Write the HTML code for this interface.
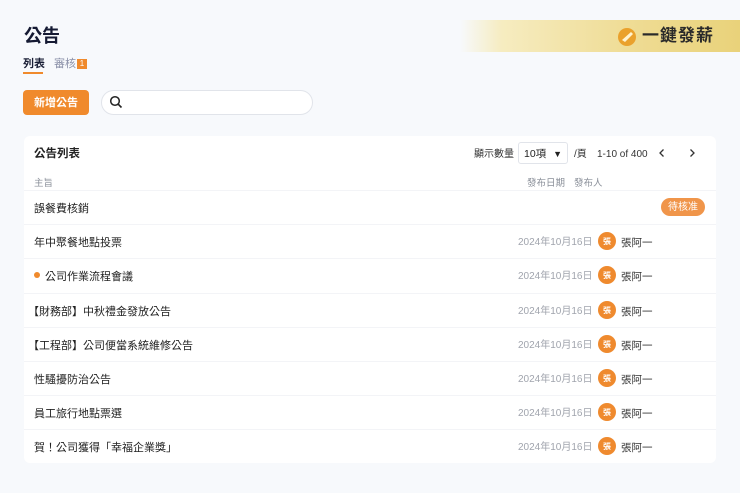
<!DOCTYPE html>
<html><head><meta charset="utf-8"><style>
*{margin:0;padding:0;box-sizing:border-box}
body{width:740px;height:493px;background:#f7f9fc;font-family:"Liberation Sans","Noto Sans CJK TC",sans-serif;position:relative;overflow:hidden;color:#222}
.abs{position:absolute;line-height:1.2}
.banner{left:460px;top:20px;width:280px;height:32px;background:linear-gradient(90deg,rgba(247,240,200,0) 0%,#f6ecc0 15%,#efdc95 60%,#e9d27a 100%)}
.title{left:24px;top:26px;font-size:18px;font-weight:bold;color:#151a33}
.tab1{left:23px;top:58px;font-size:11px;font-weight:bold;color:#1a1f36}
.tab1u{left:23px;top:72px;width:20px;height:2px;background:#f08a2c}
.tab2{left:54px;top:58px;font-size:11px;color:#8a90a8}
.badge{left:77px;top:59px;width:10px;height:10px;background:#f08a2c;color:#fff;font-size:8px;text-align:center;line-height:10px}
.btn{left:23px;top:90px;width:66px;height:25px;background:#f08a2c;border-radius:4px;color:#fff;font-size:11px;text-align:center;line-height:21px;padding-top:3px;font-weight:bold}
.search{left:101px;top:90px;width:212px;height:25px;background:#fff;border:1px solid #e1e4ea;border-radius:13px}
.card{left:24px;top:136px;width:692px;height:327px;background:#fff;border-radius:6px}
.ct{left:34px;top:148px;font-size:11.5px;font-weight:bold}
.small{font-size:9.5px;color:#8a8f99;margin-top:3px}
.row{left:24px;width:692px;height:34px;border-top:1px solid #f3f4f7}
.rt{left:34px;font-size:11px;color:#222;margin-top:3px}
.date{left:518px;font-size:10px;color:#a0a4ad;margin-top:3px}
.av{left:598px;width:18px;height:18px;border-radius:50%;background:#ef8a2e;color:#fff;font-size:8px;text-align:center;line-height:16px;padding-top:2px;font-weight:bold}
.nm{left:621px;font-size:10.5px;color:#333;margin-top:3px}
.hc{font-size:10px;color:#333;top:149px}
</style></head><body>
<div class="abs banner"></div>
<svg class="abs" style="left:616px;top:26px" width="22" height="22" viewBox="0 0 22 22"><circle cx="11" cy="11" r="9" fill="#eaa12c"/><path d="M6 14 L15 6 L17 8 L9 16 Z" fill="#fff3cf"/></svg>
<div class="abs" style="left:642px;top:26px;font-size:17px;font-weight:bold;color:#2a2a2a;letter-spacing:1px">一鍵發薪</div>
<div class="abs title">公告</div>
<div class="abs tab1">列表</div><div class="abs tab1u"></div>
<div class="abs tab2">審核</div><div class="abs badge">1</div>
<div class="abs btn">新增公告</div>
<div class="abs search"></div>
<svg class="abs" style="left:109px;top:95px" width="14" height="14" viewBox="0 0 14 14"><circle cx="6" cy="6" r="4.3" fill="none" stroke="#222" stroke-width="1.5"/><path d="M9.2 9.2 L12.5 12.5" stroke="#222" stroke-width="1.6"/></svg>
<div class="abs card"></div>
<div class="abs ct">公告列表</div>
<div class="abs hc" style="left:474px">顯示數量</div>
<div class="abs" style="left:518px;top:142px;width:50px;height:22px;border:1px solid #e1e4ea;border-radius:3px;font-size:10.5px;line-height:18px;padding-top:2px;padding-left:5px">10項<span style="position:absolute;right:5px;font-size:9px">▼</span></div>
<div class="abs hc" style="left:574px">/頁</div>
<div class="abs hc" style="left:597px">1-10 of 400</div>
<svg class="abs" style="left:657px;top:148px" width="10" height="10" viewBox="0 0 10 10"><path d="M6.5 1.5 L3 5 L6.5 8.5" fill="none" stroke="#333" stroke-width="1.3"/></svg>
<svg class="abs" style="left:687px;top:148px" width="10" height="10" viewBox="0 0 10 10"><path d="M3.5 1.5 L7 5 L3.5 8.5" fill="none" stroke="#333" stroke-width="1.3"/></svg>
<div class="abs small" style="left:34px;top:175px">主旨</div>
<div class="abs small" style="left:527px;top:175px">發布日期</div>
<div class="abs small" style="left:574px;top:175px">發布人</div>
<div class="abs row" style="top:190px"></div>
<div class="abs rt" style="top:200px">誤餐費核銷</div>
<div class="abs" style="left:661px;top:198px;width:44px;height:18px;border-radius:9px;background:#f0954a;color:#fff;font-size:10px;text-align:center;line-height:16px;padding-top:2px">待核准</div>

<div class="abs row" style="top:224px"></div>
<div class="abs rt" style="top:234px">年中聚餐地點投票</div>
<div class="abs date" style="top:234px">2024年10月16日</div><div class="abs av" style="top:232px">張</div><div class="abs nm" style="top:234px">張阿一</div>

<div class="abs row" style="top:258px"></div>
<div class="abs" style="left:34px;top:272px;width:6px;height:6px;border-radius:50%;background:#f08a2c"></div>
<div class="abs rt" style="left:45px;top:268px">公司作業流程會議</div>
<div class="abs date" style="top:268px">2024年10月16日</div><div class="abs av" style="top:266px">張</div><div class="abs nm" style="top:268px">張阿一</div>

<div class="abs row" style="top:293px"></div>
<div class="abs rt" style="left:28px;top:303px">【財務部】中秋禮金發放公告</div>
<div class="abs date" style="top:303px">2024年10月16日</div><div class="abs av" style="top:301px">張</div><div class="abs nm" style="top:303px">張阿一</div>

<div class="abs row" style="top:327px"></div>
<div class="abs rt" style="left:28px;top:337px">【工程部】公司便當系統維修公告</div>
<div class="abs date" style="top:337px">2024年10月16日</div><div class="abs av" style="top:335px">張</div><div class="abs nm" style="top:337px">張阿一</div>

<div class="abs row" style="top:361px"></div>
<div class="abs rt" style="top:371px">性騷擾防治公告</div>
<div class="abs date" style="top:371px">2024年10月16日</div><div class="abs av" style="top:369px">張</div><div class="abs nm" style="top:371px">張阿一</div>

<div class="abs row" style="top:395px"></div>
<div class="abs rt" style="top:405px">員工旅行地點票選</div>
<div class="abs date" style="top:405px">2024年10月16日</div><div class="abs av" style="top:403px">張</div><div class="abs nm" style="top:405px">張阿一</div>

<div class="abs row" style="top:429px"></div>
<div class="abs rt" style="top:439px">賀！公司獲得「幸福企業獎」</div>
<div class="abs date" style="top:439px">2024年10月16日</div><div class="abs av" style="top:437px">張</div><div class="abs nm" style="top:439px">張阿一</div>
</body></html>
